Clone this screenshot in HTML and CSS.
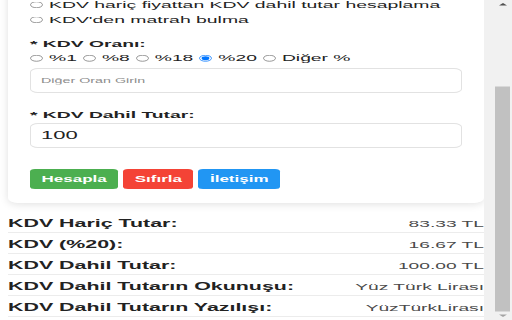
FILE: index.html
```html
<!DOCTYPE html>
<html lang="tr">
<head>
<meta charset="utf-8">
<title>KDV Hesaplama</title>
<link rel="stylesheet" href="styles.css">
</head>
<body>
<div class="viewport">
<div class="stage">
  <main class="page">
    <section class="card">
      <label class="opt"><input class="radio" type="radio" name="mode">KDV hariç fiyattan KDV dahil tutar hesaplama</label>
      <label class="opt"><input class="radio" type="radio" name="mode">KDV'den matrah bulma</label>
      <div class="field-label">* KDV Oranı:</div>
      <div class="rates">
        <label class="rate"><input class="radio" type="radio" name="rate">%1</label>
        <label class="rate"><input class="radio" type="radio" name="rate">%8</label>
        <label class="rate"><input class="radio" type="radio" name="rate">%18</label>
        <label class="rate"><input class="radio" type="radio" name="rate" checked>%20</label>
        <label class="rate"><input class="radio" type="radio" name="rate">Diğer %</label>
      </div>
      <input class="text-input other" type="text" placeholder="Diğer Oran Girin">
      <div class="field-label second">* KDV Dahil Tutar:</div>
      <input class="text-input amount" type="text" value="100">
      <div class="actions">
        <button class="btn green" type="button">Hesapla</button>
        <button class="btn red" type="button">Sıfırla</button>
        <button class="btn blue" type="button">İletişim</button>
      </div>
    </section>
    <div class="results">
      <div class="row"><span class="k">KDV Hariç Tutar:</span><span class="v">83.33 TL</span></div>
      <div class="row"><span class="k">KDV (%20):</span><span class="v">16.67 TL</span></div>
      <div class="row"><span class="k">KDV Dahil Tutar:</span><span class="v">100.00 TL</span></div>
      <div class="row"><span class="k">KDV Dahil Tutarın Okunuşu:</span><span class="v">Yüz Türk Lirası</span></div>
      <div class="row"><span class="k">KDV Dahil Tutarın Yazılışı:</span><span class="v">YüzTürkLirası</span></div>
    </div>
  </main>
  <div class="scrollbar">
    <div class="sb-btn"><span class="arrow-up"></span></div>
    <div class="sb-track"><div class="sb-thumb"></div></div>
    <div class="sb-btn"><span class="arrow-down"></span></div>
  </div>
</div>
</div>
</body>
</html>
```
FILE: styles.css
```css
html, body {
  margin: 0;
  padding: 0;
  width: 512px;
  height: 320px;
  overflow: hidden;
  background: #ffffff;
}

.viewport {
  width: 512px;
  height: 320px;
  overflow: hidden;
}

.stage {
  width: 512px;
  height: 640px;
  margin-bottom: -320px;
  display: flex;
  transform: scale(1, 0.5);
  transform-origin: 0 0;
  font-family: "Liberation Sans", Arial, sans-serif;
  color: #222;
}

.page {
  flex: 1;
  height: 640px;
  box-sizing: border-box;
  padding: 0 0 6px 8px;
  overflow: hidden;
  display: flex;
  flex-direction: column;
  justify-content: flex-end;
}

.card {
  flex-shrink: 0;
  background: #fff;
  border-radius: 10px;
  box-shadow: 0 2px 12px rgba(0, 0, 0, 0.13);
  padding: 20px 22px 28px;
}

.opt {
  display: flex;
  align-items: center;
  height: 30px;
  font-size: 19.4px;
  white-space: nowrap;
}

.radio {
  width: 13px;
  height: 13px;
  margin: 0 6px 0 0;
  flex-shrink: 0;
}

.field-label {
  font-weight: bold;
  font-size: 19.3px;
  line-height: 28px;
  margin-top: 20px;
}

.field-label.second {
  margin-top: 29px;
}

.rates {
  display: flex;
  align-items: center;
  height: 28px;
  font-size: 19.3px;
}

.rate {
  display: flex;
  align-items: center;
  margin-right: 6px;
  white-space: nowrap;
}

.text-input {
  display: block;
  width: 100%;
  height: 50px;
  box-sizing: border-box;
  border-style: solid;
  border-color: #e2e2e2;
  border-width: 2px 1px;
  border-radius: 8px;
  padding: 0 10px;
  font-family: "Liberation Sans", Arial, sans-serif;
  color: #222;
  background: #fff;
  outline: none;
}

.other {
  margin-top: 6px;
  font-size: 14.3px;
}

.other::placeholder {
  color: #8c8c8c;
}

.amount {
  margin-top: 3px;
  font-size: 22px;
}

.actions {
  display: flex;
  gap: 5px;
  margin-top: 42px;
}

.btn {
  height: 40px;
  padding: 0 11.5px;
  border: 0;
  border-radius: 5px;
  color: #fff;
  font-family: "Liberation Sans", Arial, sans-serif;
  font-weight: bold;
  font-size: 17px;
}

.green { background: #4caf50; }
.red { background: #f44336; }
.blue { background: #2196f3; }

.results {
  flex-shrink: 0;
  margin-top: 18px;
}

.row {
  display: flex;
  justify-content: space-between;
  align-items: center;
  height: 42px;
  box-sizing: border-box;
  padding-top: 6px;
  border-bottom: 2px solid #ececec;
  white-space: nowrap;
}

.k {
  font-weight: bold;
  font-size: 21.4px;
  color: #222;
}

.v {
  font-size: 19.2px;
  color: #4a4a4a;
}

.scrollbar {
  width: 28px;
  flex-shrink: 0;
  box-sizing: border-box;
  padding: 0 2px 0 11px;
  background: #f1f1f1;
  display: flex;
  flex-direction: column;
}

.sb-btn {
  height: 17px;
  display: flex;
  align-items: center;
  justify-content: center;
}

.arrow-up {
  width: 0;
  height: 0;
  border-left: 4px solid transparent;
  border-right: 4px solid transparent;
  border-bottom: 5px solid #505050;
}

.arrow-down {
  width: 0;
  height: 0;
  border-left: 4px solid transparent;
  border-right: 4px solid transparent;
  border-top: 5px solid #a3a3a3;
}

.sb-track {
  flex: 1;
  display: flex;
  flex-direction: column;
  justify-content: flex-end;
}

.sb-thumb {
  height: 450px;
  background: #c1c1c1;
}
```
